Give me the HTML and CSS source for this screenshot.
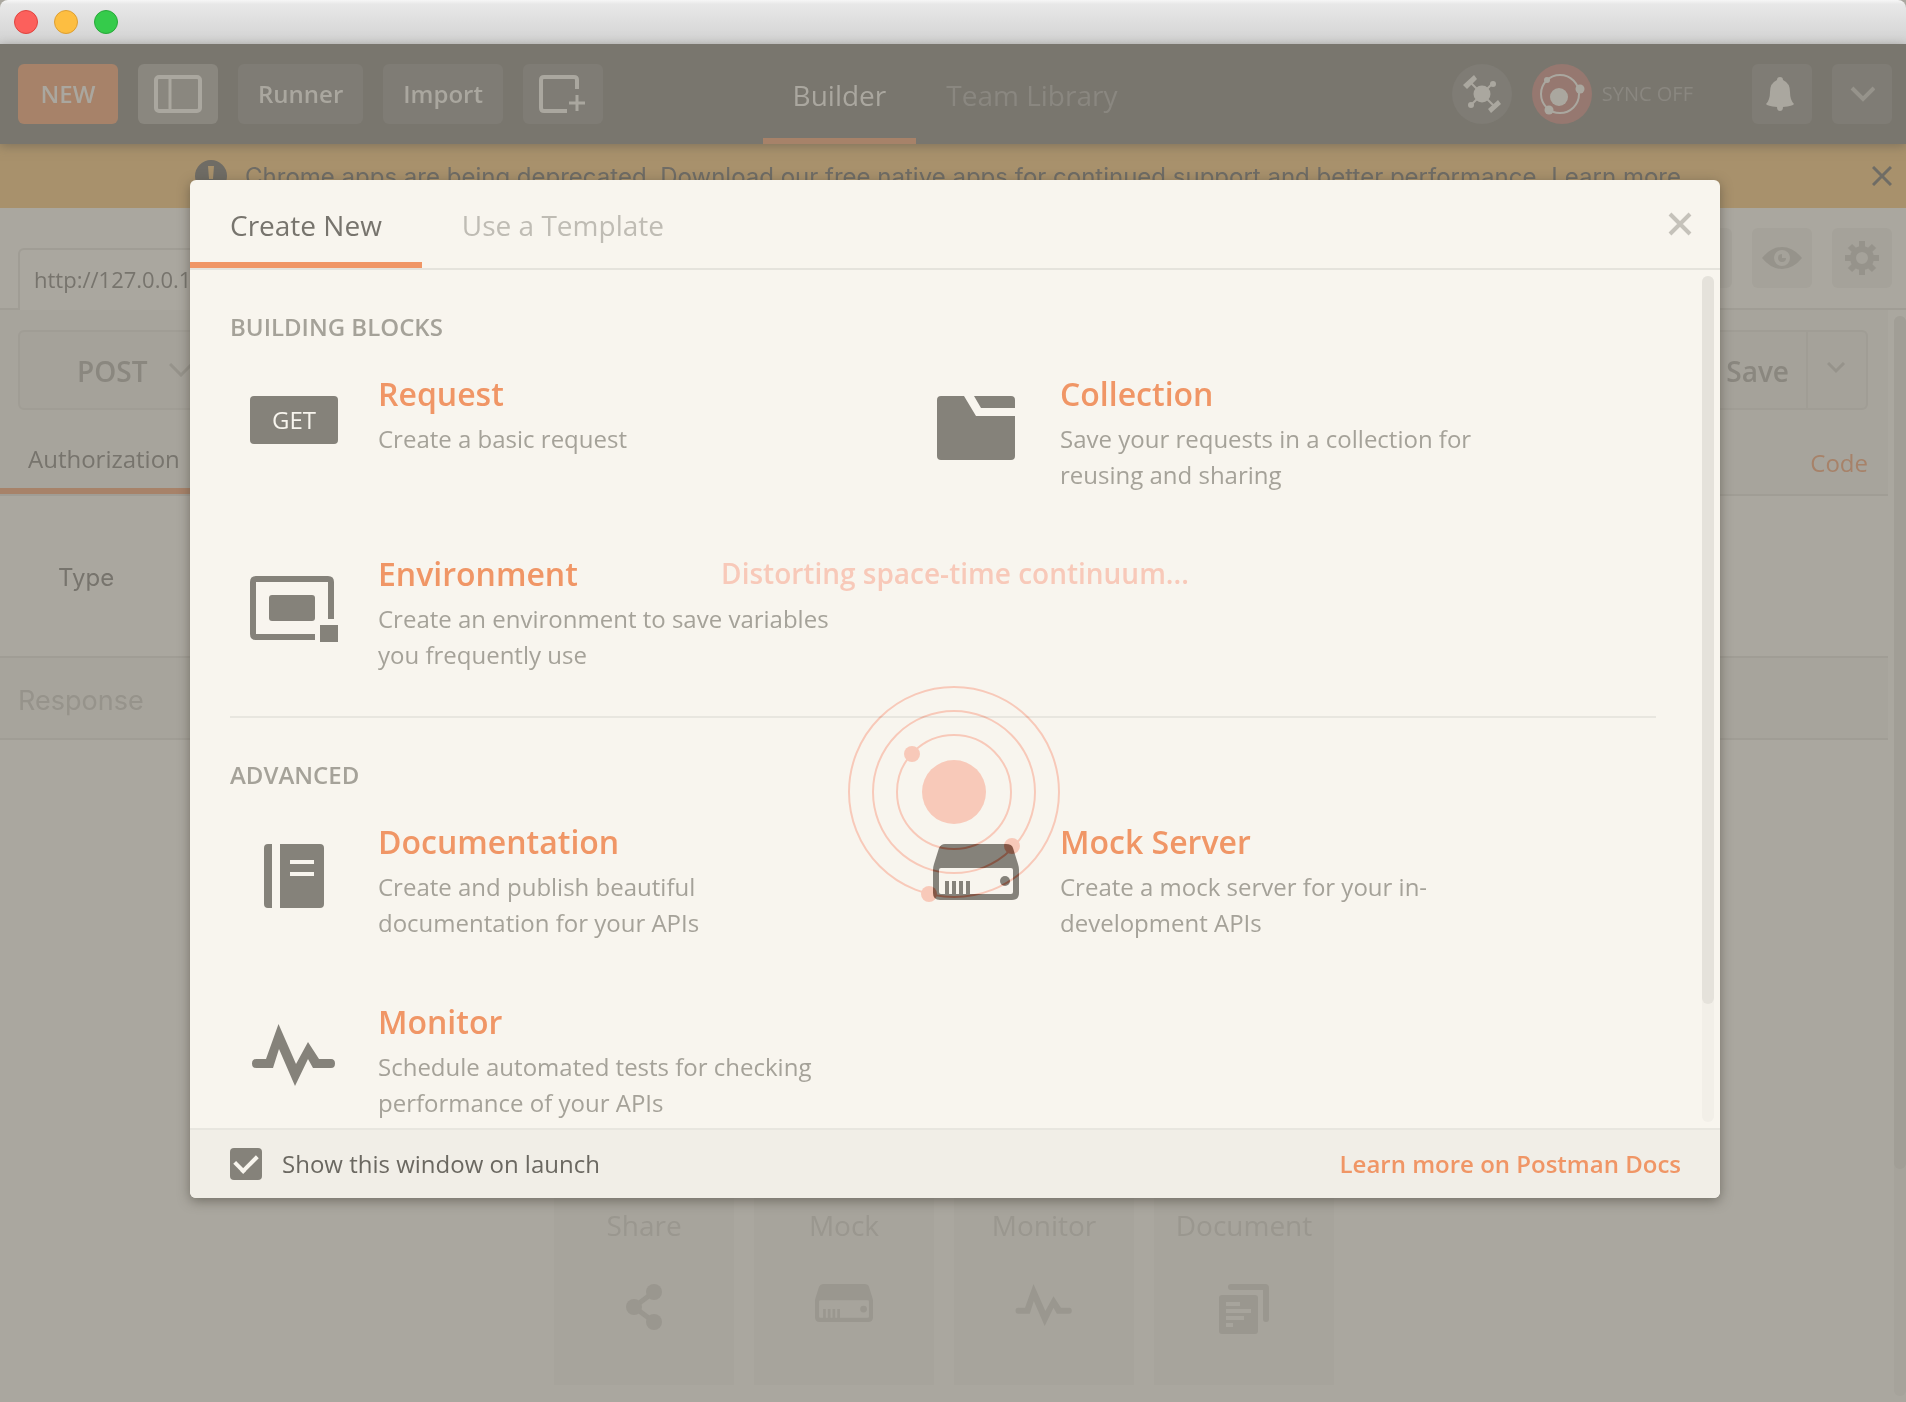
FILE: index.html
```html
<!DOCTYPE html>
<html lang="en">
<head>
<meta charset="utf-8">
<title>Postman</title>
<link rel="stylesheet" href="styles.css">
</head>
<body>
<svg class="sprite" aria-hidden="true">
  <symbol id="server" viewBox="0 0 86 56">
    <path fill-rule="evenodd" d="M12 0H73Q79 0 80 4L85 20Q86 23 86 26V49Q86 56 79 56H7Q0 56 0 49V26Q0 23 1 20L6 4Q8 0 12 0ZM8 24Q6 24 6 26V48Q6 50 8 50H78Q80 50 80 48V26Q80 24 78 24Z"/>
    <path d="M12 37h4v14h-4zM19 37h4v14h-4zM26 37h4v14h-4zM33 37h4v14h-4z"/>
    <circle cx="72" cy="37" r="5"/>
  </symbol>
  <symbol id="pulse" viewBox="0 0 84 62">
    <path d="M4 35Q0 35 0 39.500Q0 44 4 44H21L27 25L43 62L56 35L61 44H79Q83 44 83 39.500Q83 35 79 35H67L56 18L44 40L26.500 0L14 35Z"/>
  </symbol>
</svg>

<div class="window">
  <header class="titlebar">
    <button class="light red" aria-label="Close window"></button>
    <button class="light yellow" aria-label="Minimize window"></button>
    <button class="light green" aria-label="Zoom window"></button>
  </header>

  <nav class="toolbar">
    <div class="tools">
      <button class="tool new">NEW</button>
      <button class="tool icon-tool selected" aria-label="Toggle sidebar">
        <svg width="48" height="38" viewBox="0 0 48 38" fill="none" stroke="currentColor"><rect x="2" y="2" width="44" height="34" rx="3" stroke-width="4"/><path d="M16 3V35" stroke-width="3"/></svg>
      </button>
      <button class="tool">Runner</button>
      <button class="tool">Import</button>
      <button class="tool icon-tool" aria-label="New window">
        <svg width="48" height="38" viewBox="0 0 48 38" fill="none" stroke="currentColor"><path d="M28 36H5Q2 36 2 33V5Q2 2 5 2H35Q38 2 38 5V14" stroke-width="4"/><path d="M38 20V36M30 28H46" stroke-width="3"/></svg>
      </button>
    </div>
    <div class="views">
      <a class="view active" href="#builder">Builder</a>
      <a class="view" href="#library">Team Library</a>
    </div>
    <div class="status">
      <button class="round" aria-label="Proxy">
        <svg width="60" height="60" viewBox="-30 -30 60 60" fill="currentColor"><path d="M-12-12L12 12M12-12L-12 12" stroke="currentColor" stroke-width="2"/><circle r="8.500"/><path d="M-19-9L-8-19L-5-15L-15-5ZM6 15L16 6L19 10L9 19Z"/><circle cx="11" cy="-10" r="3"/><circle cx="-11" cy="11" r="3"/></svg>
      </button>
      <button class="round sync" aria-label="Sync">
        <svg width="60" height="60" viewBox="-30 -30 60 60" fill="currentColor"><circle cx="-2" r="19" fill="none" stroke="currentColor" stroke-width="2"/><circle cx="-3" cy="3" r="9"/><circle cx="-15" cy="-14" r="3"/><circle cx="18" cy="-5" r="4.500"/><circle cx="-13" cy="16" r="4.500"/></svg>
      </button>
      <span class="sync-label">SYNC OFF</span>
      <button class="square dark" aria-label="Notifications">
        <svg width="32" height="34" viewBox="0 0 32 34" fill="currentColor"><path d="M14 0Q17 0 17 3Q24 6 24 15Q24 23 28 27Q27 29 17 30Q17 34 14 34Q11 34 11 30Q1 29 0 27Q4 23 4 15Q4 6 11 3Q11 0 14 0Z"/></svg>
      </button>
      <button class="square dark dim" aria-label="Account menu">
        <svg width="26" height="16" viewBox="0 0 26 16" fill="none" stroke="currentColor" stroke-width="4"><path d="M3 2L14 13L25 2"/></svg>
      </button>
    </div>
  </nav>

  <aside class="banner">
    <p class="notice">
      <svg width="32" height="32" viewBox="0 0 32 32"><circle cx="16" cy="16" r="16" fill="#6f6c65"/><path d="M13 6H19L18 19H14ZM14 22h4v4h-4z" fill="#a8916c"/></svg>
      <span>Chrome apps are being deprecated. Download our free native apps for continued support and better performance.</span>
      <a href="#apps">Learn more</a>
    </p>
    <button class="bare" aria-label="Dismiss">
      <svg width="20" height="20" viewBox="0 0 20 20" fill="none" stroke="currentColor" stroke-width="3"><path d="M1 1L19 19M19 1L1 19"/></svg>
    </button>
  </aside>

  <div class="tabstrip">
    <div class="strip-start"></div>
    <a class="request-tab" href="#request">http://127.0.0.1</a>
    <div class="strip-rest">
      <button class="square" aria-label="Environment"></button>
      <button class="square" aria-label="Quick look">
        <svg width="40" height="24" viewBox="0 0 40 24"><path fill="currentColor" fill-rule="evenodd" d="M0 12Q9 1 20 1T40 12Q31 23 20 23T0 12ZM20 4A8 8 0 1 0 20 20A8 8 0 1 0 20 4Z"/><path fill="currentColor" d="M20 8V12H24A4 4 0 1 1 20 8Z"/></svg>
      </button>
      <button class="square" aria-label="Settings">
        <svg width="36" height="36" viewBox="-18 -18 36 36" fill="none" stroke="currentColor"><circle r="9" stroke-width="6"/><path stroke-width="6" d="M0-17V-11M0 17V11M-17 0H-11M17 0H11M-12-12L-8-8M12 12L8 8M12-12L8-8M-12 12L-8 8"/></svg>
      </button>
    </div>
  </div>

  <div class="workspace">
    <main class="content">
      <section class="request">
        <div class="request-row">
          <div class="method">
            <select aria-label="Method"><option>POST</option></select>
            <svg width="24" height="14" viewBox="0 0 24 14" fill="none" stroke="currentColor" stroke-width="3"><path d="M1 1L12 12L23 1"/></svg>
          </div>
          <div class="save-group">
            <button class="save">Save</button>
            <button class="save-more" aria-label="Save options">
              <svg width="20" height="16" viewBox="0 0 20 16" fill="none" stroke="currentColor" stroke-width="3"><path d="M1 1L9 9L17 1"/></svg>
            </button>
          </div>
        </div>
        <div class="request-tabs">
          <a class="section-tab" href="#auth">Authorization</a>
          <a class="code" href="#code">Code</a>
        </div>
      </section>
      <div class="auth-type">Type</div>
      <div class="response">Response</div>
      <div class="cards">
        <button class="card">Share
          <svg width="36" height="46" viewBox="0 0 36 46" fill="currentColor"><path d="M28 8L8 23L28 38" fill="none" stroke="currentColor" stroke-width="5"/><circle cx="28" cy="8" r="8"/><circle cx="8" cy="23" r="8"/><circle cx="28" cy="38" r="8"/></svg>
        </button>
        <button class="card">Mock <svg width="58" height="38" fill="currentColor"><use href="#server"/></svg></button>
        <button class="card">Monitor <svg width="58" height="42" fill="currentColor"><use href="#pulse"/></svg></button>
        <button class="card">Document
          <svg width="50" height="50" viewBox="0 0 50 50" fill="currentColor"><path d="M12 0H46Q50 0 50 4V35Q50 38 47 38Q44 38 44 35V6H12Q9 6 9 3Q9 0 12 0Z"/><path fill-rule="evenodd" d="M3 11H36Q39 11 39 14V47Q39 50 36 50H3Q0 50 0 47V14Q0 11 3 11ZM7 18V22H21V18ZM7 25V29H32V25ZM7 32V36H25V32ZM7 39V43H14V39Z"/></svg>
        </button>
      </div>
    </main>
    <div class="scroll"><div class="thumb page-thumb"></div></div>
  </div>

  <div class="overlay">
    <section class="modal" role="dialog" aria-label="Create New">
      <header class="modal-head">
        <button class="modal-tab active">Create New</button>
        <button class="modal-tab">Use a Template</button>
        <button class="bare modal-close" aria-label="Close">
          <svg width="24" height="24" viewBox="0 0 24 24" fill="none" stroke="currentColor" stroke-width="4"><path d="M2 2L22 22M22 2L2 22"/></svg>
        </button>
      </header>
      <div class="modal-body">
        <div class="blocks">
          <h2>BUILDING BLOCKS</h2>
          <div class="grid">
            <article class="item">
              <div class="icon"><span class="get">GET</span></div>
              <div class="copy"><h3><a href="#new-request">Request</a></h3><p>Create a basic request</p></div>
            </article>
            <article class="item">
              <div class="icon"><svg width="78" height="64" viewBox="0 0 78 64" fill="currentColor"><path d="M4 0H27L39 20H78V60Q78 64 74 64H4Q0 64 0 60V4Q0 0 4 0ZM37 0H74Q78 0 78 4V12H44Z"/></svg></div>
              <div class="copy"><h3><a href="#new-collection">Collection</a></h3><p>Save your requests in a collection for reusing and sharing</p></div>
            </article>
            <article class="item">
              <div class="icon"><svg width="88" height="66" viewBox="0 0 88 66" fill="currentColor"><path d="M65 61H6Q3 61 3 58V6Q3 3 6 3H78Q81 3 81 6V43" fill="none" stroke="currentColor" stroke-width="6"/><rect x="19" y="19" width="46" height="26" rx="3"/><path d="M70 49h18v17h-18z"/></svg></div>
              <div class="copy"><h3><a href="#new-environment">Environment</a></h3><p>Create an environment to save variables you frequently use</p></div>
            </article>
          </div>
          <hr>
          <h2>ADVANCED</h2>
          <div class="grid">
            <article class="item">
              <div class="icon"><svg width="60" height="64" viewBox="0 0 60 64" fill="currentColor"><path fill-rule="evenodd" d="M4 0H8V64H4Q0 64 0 60V4Q0 0 4 0ZM16 0H56Q60 0 60 4V60Q60 64 56 64H16ZM26 16V20H50V16ZM26 28V32H50V28Z"/></svg></div>
              <div class="copy"><h3><a href="#new-docs">Documentation</a></h3><p>Create and publish beautiful documentation for your APIs</p></div>
            </article>
            <article class="item">
              <div class="icon"><svg width="86" height="56" fill="currentColor"><use href="#server"/></svg></div>
              <div class="copy"><h3><a href="#new-mock">Mock Server</a></h3><p>Create a mock server for your in-development APIs</p></div>
            </article>
            <article class="item">
              <div class="icon"><svg width="84" height="62" fill="currentColor"><use href="#pulse"/></svg></div>
              <div class="copy"><h3><a href="#new-monitor">Monitor</a></h3><p>Schedule automated tests for checking performance of your APIs</p></div>
            </article>
          </div>
        </div>
        <div class="scroll modal-scroll"><div class="thumb modal-thumb"></div></div>
      </div>
      <footer class="modal-foot">
        <label class="launch"><input type="checkbox" checked>Show this window on launch</label>
        <a href="#docs">Learn more on Postman Docs</a>
      </footer>
    </section>
  </div>

  <div class="loader-text" role="status">Distorting space-time continuum...</div>
  <svg class="orbits" width="224" height="224" viewBox="-112 -112 224 224" aria-hidden="true">
    <g fill="none" stroke="#002c35" stroke-width="2"><circle r="105"/><circle r="81"/><circle r="57"/></g>
    <g fill="#002c35"><circle r="32"/><circle cx="-42" cy="-38" r="8"/><circle cx="58" cy="54" r="8"/><circle cx="-25" cy="102" r="8"/></g>
  </svg>
</div>
</body>
</html>
```
FILE: styles.css
```css
* { box-sizing: border-box; }

body {
  margin: 0;
  background: #aaa79f;
  color: #77746d;
  font-family: "Open Sans", sans-serif;
  font-size: 24px;
  line-height: 36px;
}

button, select { font: inherit; color: inherit; border: 0; background: none; padding: 0; margin: 0; }
a { color: inherit; text-decoration: none; }
h2, h3, p { margin: 0; }
svg { display: block; flex: none; }
.sprite { position: absolute; width: 0; height: 0; }

.window { position: relative; display: flex; flex-direction: column; min-height: 100vh; }

/* Title bar */
.titlebar {
  display: flex;
  align-items: center;
  gap: 16px;
  height: 44px;
  padding-left: 14px;
  background: linear-gradient(#f6f6f6, #e8e8e8 4px, #d2d2d2);
  border-radius: 8px 8px 0 0;
}
.light { width: 24px; height: 24px; border-radius: 50%; border: 1px solid; }
.red { background: #fc605c; border-color: #e0443f; }
.yellow { background: #fdbe41; border-color: #dd9f33; }
.green { background: #35cb4b; border-color: #28a93a; }

/* Toolbar */
.toolbar {
  position: relative;
  display: grid;
  grid-template-columns: 1fr auto 1fr;
  align-items: center;
  height: 100px;
  padding: 0 14px 0 18px;
  background: #79766e;
  box-shadow: 0 2px 10px rgba(90, 85, 75, .5);
}
.tools, .status { display: flex; align-items: center; gap: 20px; }
.status { justify-content: flex-end; }
.tool {
  height: 60px;
  padding: 0 20px;
  border-radius: 6px;
  background: #7f7c75;
  color: #aaa79f;
  font-weight: 600;
}
.tool.new { width: 100px; background: #a78269; }
.tool.icon-tool { width: 80px; padding: 0 16px; }
.tool.selected { background: #8a877f; }
.views { display: flex; height: 100%; font-size: 28px; }
.view { padding: 33px 30px 0; border-bottom: 6px solid transparent; color: #8a8780; }
.view.active { color: #aaa79f; border-color: #a78269; }
.round { width: 60px; height: 60px; border-radius: 50%; background: #7f7c75; color: #aaa79f; }
.round.sync { background: #967870; }
.sync-label { margin: 0 39px 0 -10px; font-size: 20px; color: #8a8780; }
.square {
  display: grid;
  place-items: center;
  width: 60px;
  height: 60px;
  border-radius: 6px;
  background: #a5a29a;
  color: #96938b;
}
.square.dark { background: #7f7c75; color: #aaa79f; }
.square.dim { color: #96938b; }

/* Deprecation banner */
.banner {
  display: flex;
  align-items: center;
  height: 64px;
  padding: 0 14px;
  background: #a8916c;
  color: #6f6c65;
  font-family: Inter, sans-serif;
}
.notice { display: flex; flex: 1; justify-content: center; align-items: center; gap: 8px; padding-right: 10px; white-space: nowrap; }
.notice svg { margin-right: 10px; }
.notice span, .notice a { padding-top: 2px; }
.bare { color: inherit; }

/* Open request tabs */
.tabstrip { display: flex; align-items: flex-end; height: 102px; }
.strip-start { width: 18px; border-bottom: 2px solid #a09d95; }
.request-tab {
  width: 240px;
  height: 62px;
  padding: 11px 14px;
  border: 2px solid #a09d95;
  border-bottom: 0;
  border-radius: 6px 6px 0 0;
  font-size: 22px;
}
.strip-rest {
  display: flex;
  flex: 1;
  align-items: center;
  justify-content: flex-end;
  gap: 20px;
  height: 102px;
  padding-right: 14px;
  border-bottom: 2px solid #a09d95;
}

/* Workspace */
.workspace { display: flex; flex: 1; gap: 6px; }
.content { display: flex; flex: 1; flex-direction: column; }
.scroll { display: flex; width: 12px; margin: 6px 0; border-radius: 6px; background: #a6a39b; }
.thumb { flex: 1; border-radius: 6px; }
.page-thumb { height: 79%; background: #a19e96; }
.request { padding-top: 20px; background: #a7a49c; border-bottom: 2px solid #a09d95; }
.request-row { display: flex; justify-content: space-between; padding: 0 20px 0 18px; }
.method, .save-group {
  display: flex;
  align-items: center;
  height: 80px;
  border: 2px solid #a09d95;
  border-radius: 6px;
  background: #a5a29a;
  color: #96938b;
}
.method { gap: 12px; width: 220px; padding-left: 53px; }
.method select { width: 84px; appearance: none; padding: 2px 0 0 4px; color: #8a877f; font-size: 28px; font-weight: 600; line-height: 40px; }
.save { width: 150px; padding: 2px 17px 0 0; text-align: right; color: #8a877f; font-size: 28px; font-weight: 600; }
.save-more { display: grid; place-items: center; width: 60px; height: 76px; border-left: 2px solid #a09d95; }
.request-tabs { display: flex; justify-content: space-between; height: 84px; padding-right: 20px; }
.section-tab { width: 207px; padding: 31px 28px 0; border-bottom: 6px solid #a78269; }
.code { padding-top: 35px; color: #a78269; }
.auth-type {
  height: 162px;
  padding: 64px 58px;
  border-bottom: 2px solid #a09d95;
  font-family: Inter, sans-serif;
}
.response {
  height: 82px;
  padding: 24px 18px;
  border-bottom: 2px solid #a09d95;
  background: #a7a49c;
  color: #96938b;
  font-family: Inter, sans-serif;
  font-size: 27px;
  line-height: 38px;
}
.cards { display: flex; flex: 1; align-items: flex-end; justify-content: center; gap: 20px; padding-bottom: 17px; }
.card {
  display: flex;
  flex-direction: column;
  align-items: center;
  gap: 41px;
  width: 180px;
  height: 200px;
  padding-top: 22px;
  background: #a7a49c;
  color: #9a978f;
  font-size: 28px;
}

/* Create New dialog */
.overlay { position: absolute; inset: 0; padding: 180px 186px 0 190px; }
.modal {
  overflow: hidden;
  border-radius: 6px;
  background: #f8f5ee;
  box-shadow: 0 3px 12px rgba(60, 55, 45, .5);
  color: #a5a299;
}
.modal-head { display: flex; height: 90px; border-bottom: 2px solid #e5e3dc; font-size: 28px; }
.modal-tab { padding: 8px 40px 0; border-bottom: 6px solid transparent; color: #bfbcb4; }
.modal-tab.active { color: #77746d; border-color: #f09666; }
.modal-close { margin: 0 28px 0 auto; color: #c5c2ba; }
.modal-body { display: flex; justify-content: space-between; min-height: 858px; }
.blocks { flex: 1; padding: 39px 46px 0 40px; }
.blocks h2 { margin-bottom: 27px; font-size: 24px; font-weight: 600; line-height: 36px; }
.grid { display: grid; grid-template-columns: 1fr 1fr; gap: 59px 0; margin-right: 62px; }
.item { display: flex; min-height: 121px; }
.icon { display: flex; justify-content: center; align-items: flex-start; flex: none; width: 128px; padding-top: 24px; margin-right: 20px; color: #85827a; }
.get {
  width: 88px;
  border-radius: 4px;
  background: #85827a;
  color: #f8f5ee;
  line-height: 48px;
  text-align: center;
}
.copy { max-width: 460px; }
.copy h3 { margin-bottom: 5px; color: #f09666; font-size: 32px; font-weight: 600; line-height: 44px; }
.blocks hr { height: 2px; margin: 43px 0 39px; border: 0; background: #e8e6df; }
.modal-scroll { margin-right: 6px; background: #f2efe8; }
.modal-thumb { height: 86%; background: #e5e2db; }
.modal-foot {
  display: flex;
  align-items: center;
  justify-content: space-between;
  height: 70px;
  padding: 0 39px 0 40px;
  border-top: 2px solid #e8e6df;
  background: #f1eee7;
}
.modal-foot a { color: #f09666; font-weight: 600; }
.launch { display: flex; align-items: center; gap: 20px; color: #6b6861; }
.launch input {
  display: grid;
  place-items: center;
  appearance: none;
  width: 32px;
  height: 32px;
  margin: 0;
  border-radius: 4px;
  background: #85827a;
}
.launch input:checked::before {
  content: "";
  width: 18px;
  height: 10px;
  margin-bottom: 6px;
  border: solid #f8f5ee;
  border-width: 0 0 4px 4px;
  rotate: -45deg;
}

/* Loading indicator, darkens whatever lies under it */
.loader-text {
  position: absolute;
  top: 553px;
  width: 100%;
  padding-left: 4px;
  text-align: center;
  color: #f8c9b9;
  font-size: 28px;
  font-weight: 600;
  line-height: 40px;
}
.orbits { position: absolute; top: 680px; left: calc(50% - 111px); mix-blend-mode: difference; }
```
